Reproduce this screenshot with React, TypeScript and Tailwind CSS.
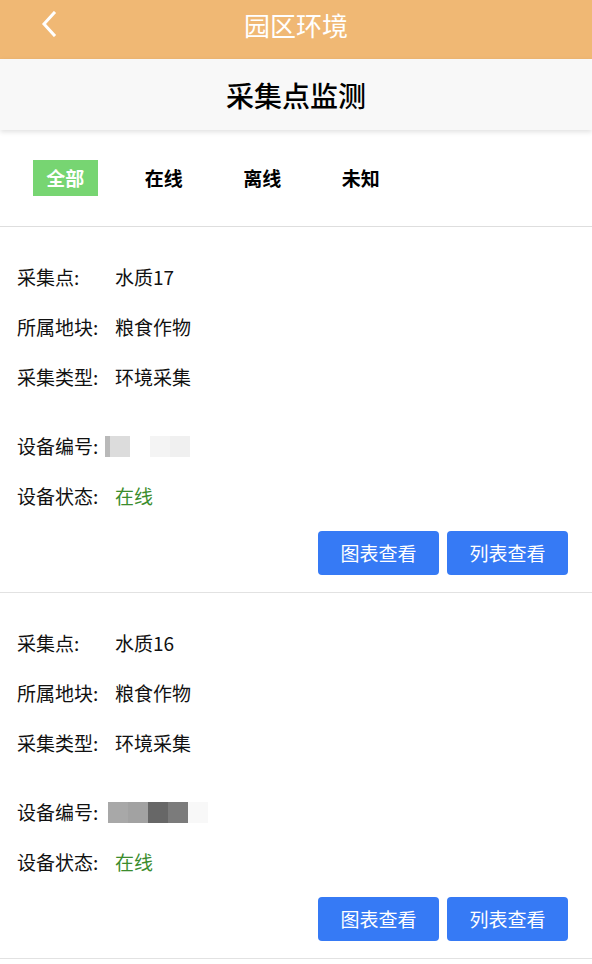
import React from 'react';

const tabs = ['全部', '在线', '离线', '未知'];

const points = [
  { name: '水质17', land: '粮食作物', type: '环境采集', status: '在线', blur: ['#b9b9b9:5', '#dcdcdc:20', '#ffffff:20', '#f4f4f4:20', '#f0f0f0:20'] },
  { name: '水质16', land: '粮食作物', type: '环境采集', status: '在线', blur: ['#ffffff:3', '#a8a8a8:20', '#a2a2a2:20', '#676767:20', '#7b7b7b:20', '#f8f8f8:20'] },
];

function Row({ label, children }: { label: string; children: React.ReactNode }) {
  return (
    <div className="flex h-[50px] items-center">
      <span className="w-[98px] shrink-0 text-[#111]">{label}</span>
      {children}
    </div>
  );
}

function PointCard({ p }: { p: (typeof points)[number] }) {
  return (
    <div className="border-b border-[#e2e2e2] px-[17px] pt-[25px] pb-[17px]">
      <Row label="采集点:">
        <span className="text-[#111]">{p.name}</span>
      </Row>
      <Row label="所属地块:">
        <span className="text-[#111]">{p.land}</span>
      </Row>
      <Row label="采集类型:">
        <span className="text-[#111]">{p.type}</span>
      </Row>
      <div className="mt-[19px] flex h-[50px] items-center">
        <span className="w-[88px] shrink-0 text-[#111]">设备编号:</span>
        <div className="flex h-[21px]">
          {p.blur.map((b, i) => {
            const [c, w] = b.split(':');
            // blurred id, pixel-ish blocks
            return <div key={i} style={{ background: c, width: Number(w) }} />;
          })}
        </div>
      </div>
      <Row label="设备状态:">
        <span className="text-[#3b8d2e]">{p.status}</span>
      </Row>
      <div className="mt-[10px] flex justify-end gap-2 pr-[7px]">
        <button className="h-[44px] w-[121px] rounded-[4px] bg-[#367af5] text-white">图表查看</button>
        <button className="h-[44px] w-[121px] rounded-[4px] bg-[#367af5] text-white">列表查看</button>
      </div>
    </div>
  );
}

export default function App() {
  return (
    <div className="min-h-screen bg-white text-[19px] font-['Noto_Sans_CJK_SC','Noto_Sans',sans-serif]">
      <header className="relative flex h-[59px] justify-center bg-[#f0b874] pt-[6px]">
        <svg className="absolute left-[41px] top-[11px]" width="16" height="26" viewBox="0 0 16 26" fill="none">
          <polyline points="13,2 3,13 13,24" stroke="white" strokeWidth="3" strokeLinecap="square" />
        </svg>
        <h1 className="text-[26px] leading-[38px] text-white">园区环境</h1>
      </header>

      <div className="relative z-10 flex h-[71px] items-center justify-center bg-[#f8f8f8] shadow-[0_2px_5px_rgba(0,0,0,0.12)]">
        <h2 className="text-[28px] font-medium text-black">采集点监测</h2>
      </div>

      <div className="flex h-[97px] items-center border-b border-[#dedede] px-[16px]">
        {tabs.map((t, i) => (
          <div key={t} className="flex w-[98.5px] justify-center">
            <span
              className={
                i === 0
                  ? 'flex h-[36px] w-[65px] items-center justify-center bg-[#77d572] font-bold text-white'
                  : 'font-bold text-black'
              }
            >
              {t}
            </span>
          </div>
        ))}
      </div>

      {points.map((p) => (
        <PointCard key={p.name} p={p} />
      ))}
    </div>
  );
}
